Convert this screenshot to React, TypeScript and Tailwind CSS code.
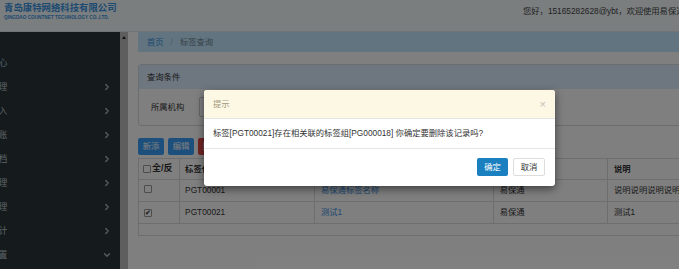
import { ChevronDown, ChevronRight } from 'lucide-react';

const menu = [
  { label: '个人中心', open: null },
  { label: '机构管理', open: false },
  { label: '数据导入', open: false },
  { label: '保单对账', open: false },
  { label: '客户归档', open: false },
  { label: '渠道管理', open: false },
  { label: '标签管理', open: false },
  { label: '数据统计', open: false },
  { label: '系统设置', open: true },
];

const rows = [
  { code: 'PGT00001', name: '易保通标签名称', channel: '易保通', note: '说明说明说明说明说明', checked: false },
  { code: 'PGT00021', name: '测试1', channel: '易保通', note: '测试1', checked: true },
];

function Box({ checked }: { checked?: boolean }) {
  return (
    <span className="inline-flex h-[8px] w-[8px] items-center justify-center rounded-[1px] border border-[#9a9a9a] bg-white text-[7px] leading-none text-[#222]">
      {checked ? '✔' : ''}
    </span>
  );
}

export default function App() {
  return (
    <div className="relative h-[269px] w-[679px] overflow-hidden bg-white font-['Liberation_Sans','Noto_Sans_CJK_SC',sans-serif] text-[8.3px] text-[#333]">
      {/* Top bar */}
      <header className="flex h-8 items-start justify-between border-b border-[#e2e8ec] bg-[#f6fdff]">
        <div className="pl-[4px] pt-[2px]">
          <div className="text-[9.4px] font-bold leading-[12px] text-[#3a94e2]">青岛康特网络科技有限公司</div>
          <div className="whitespace-nowrap text-[4.7px] font-bold leading-[7px] text-[#3a94e2]">
            QINGDAO COUNTNET TECHNOLOGY CO.,LTD.
          </div>
        </div>
        <div className="w-[156px] overflow-hidden whitespace-nowrap pt-[5px] text-[#444]">
          您好，15165282628@ybt，欢迎使用易保通管理系统
        </div>
      </header>

      <div className="flex h-[237px]">
        {/* Sidebar */}
        <aside className="w-[120px] overflow-hidden bg-[#2a3439] pt-[19px]">
          {menu.map((m, i) => (
            <div key={i} className="flex h-6 items-center justify-between pr-[8px] text-[#b9c5cc]">
              <span className={`-ml-[27px] whitespace-nowrap text-[8.6px] ${i === 0 ? 'text-[#a6cde6]' : ''}`}>
                {m.label}
              </span>
              {m.open === null ? null : m.open ? (
                <ChevronDown size={10} strokeWidth={3} className="text-[#b0bcc4]" />
              ) : (
                <ChevronRight size={10} strokeWidth={3} className="text-[#b0bcc4]" />
              )}
            </div>
          ))}
        </aside>

        {/* Scrollbar */}
        <div className="flex w-2 flex-col items-center bg-[#bdbdbd]">
          <div className="mt-[4px] h-0 w-0 border-x-[2px] border-b-[3px] border-x-transparent border-b-[#222]" />
        </div>

        {/* Main */}
        <main className="flex-1 overflow-hidden pl-[10px]">
          <div className="w-[560px]">
            <div className="flex h-5 items-center gap-[7px] rounded-[2px] bg-[#c2e9ff] px-[9px]">
              <span className="text-[#3690e0]">首页</span>
              <span className="text-[#aab8c2]">/</span>
              <span className="text-[#6f8391]">标签查询</span>
            </div>

            <div className="mt-3 rounded-[3px] border border-[#d5dde3]">
              <div className="flex h-6 items-center bg-[#dceeff] px-[8px]">查询条件</div>
              <div className="flex h-[36px] items-center pl-[12px]">
                <span>所属机构</span>
                <div className="ml-[15px] h-[20px] w-[200px] rounded-[2px] border border-[#ccc]" />
              </div>
            </div>

            <div className="mt-3 flex gap-[4px]">
              <button className="h-[17px] w-[26px] rounded-[2px] bg-[#3a9ef8] text-white">新添</button>
              <button className="h-[17px] w-[26px] rounded-[2px] bg-[#3a9ef8] text-white">编辑</button>
              <button className="h-[17px] w-[26px] rounded-[2px] bg-[#e04844] text-white">删除</button>
            </div>

            <table className="mt-[3px] w-full border-collapse border border-[#ddd] text-left">
              <thead>
                <tr className="h-[21px] font-bold text-[#333]">
                  <th className="w-[42px] border border-[#ddd] pl-[4px] font-bold">
                    <span className="inline-flex items-center">
                      <Box />
                      <span className="ml-[1px] text-[9px]">全/反</span>
                    </span>
                  </th>
                  <th className="w-[140px] border border-[#ddd] pl-[5px]">标签代码</th>
                  <th className="w-[188px] border border-[#ddd] pl-[6px]">标签名称</th>
                  <th className="w-[120px] border border-[#ddd] pl-[6px]">渠道</th>
                  <th className="border border-[#ddd] pl-[6px]">说明</th>
                </tr>
              </thead>
              <tbody>
                {rows.map((r) => (
                  <tr key={r.code} className="h-[22px]">
                    <td className="border border-[#ddd] pl-[5px]">
                      <Box checked={r.checked} />
                    </td>
                    <td className="border border-[#ddd] pl-[5px]">{r.code}</td>
                    <td className="border border-[#ddd] pl-[6px] text-[#3690e0]">{r.name}</td>
                    <td className="border border-[#ddd] pl-[6px]">{r.channel}</td>
                    <td className="whitespace-nowrap border border-[#ddd] pl-[6px]">{r.note}</td>
                  </tr>
                ))}
                <tr className="h-[12px]">
                  <td colSpan={5} className="border border-[#ddd]" />
                </tr>
              </tbody>
            </table>
          </div>
        </main>
      </div>

      {/* Backdrop */}
      <div className="absolute inset-0 bg-black/50" />

      {/* Confirm dialog */}
      <div className="absolute left-[204px] top-[90px] w-[351px] overflow-hidden rounded-[3px] bg-white shadow-[0_3px_9px_rgba(0,0,0,0.5)]">
        <div className="flex h-[29px] items-center justify-between border-b border-[#e5e5e5] bg-[#fdf8e4] px-[9px]">
          <span className="text-[#a3987f]">提示</span>
          <span className="text-[11px] leading-none text-[#c4c0b8]">×</span>
        </div>
        <div className="flex h-[29px] items-center px-[9px]">
          标签[PGT00021]存在相关联的标签组[PG000018] 你确定要删除该记录吗?
        </div>
        <div className="flex h-[38px] justify-end gap-[5px] border-t border-[#e5e5e5] pr-[10px] pt-[9px]">
          <button className="h-[18px] w-[31px] rounded-[2px] bg-[#1a80c0] text-white">确定</button>
          <button className="h-[18px] w-[32px] rounded-[2px] border border-[#ddd] bg-white text-[#333]">取消</button>
        </div>
      </div>
    </div>
  );
}
